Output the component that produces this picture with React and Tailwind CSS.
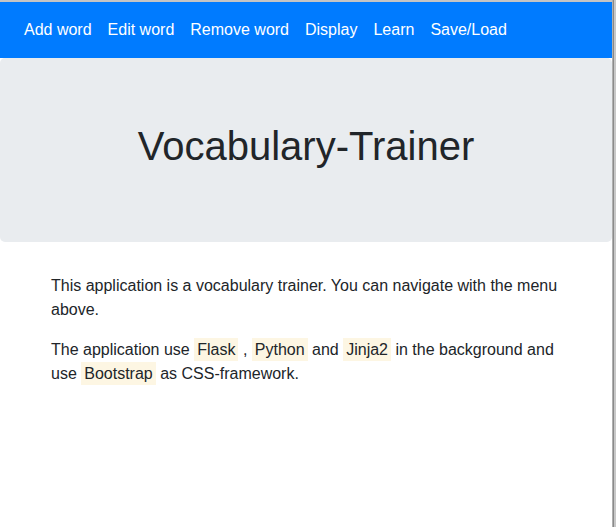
export default function App() {
  const links = ["Add word", "Edit word", "Remove word", "Display", "Learn", "Save/Load"];
  const Hl = ({ children }) => (
    <span className="inline-block bg-[#fdf6e3] px-[3px] leading-[23px]">{children}</span>
  );
  return (
    <div className="flex h-[527px] w-[616px] bg-white text-[#212529]" style={{ fontFamily: '"Liberation Sans", Arial, sans-serif' }}>
      <div className="flex w-[612px] flex-col">
        <div className="h-[2px] bg-[#c4c4c4]" />
        <nav className="flex h-[56px] items-center bg-[#007bff] px-4">
          {links.map((l) => (
            <a key={l} className="px-2 py-2 text-base leading-6 text-white">{l}</a>
          ))}
        </nav>
        <div className="mb-8 rounded-[5px] bg-[#e9ecef] px-8 pt-16 pb-[72px] text-center">
          <h1 className="text-[40px] font-normal leading-[48px]">Vocabulary-Trainer</h1>
        </div>
        <div className="mx-auto w-[540px] px-[15px] text-base leading-6">
          <p className="mb-4">
            This application is a vocabulary trainer. You can navigate with the menu above.
          </p>
          <p className="mb-4">
            The application use <Hl>Flask</Hl> , <Hl>Python</Hl> and <Hl>Jinja2</Hl> in the background and use <Hl>Bootstrap</Hl> as CSS-framework.
          </p>
        </div>
      </div>
      <div className="flex w-[4px] bg-[#d0d0d0]">
        <div className="w-[1px] bg-[#b0b0b0]" />
        <div className="w-[1px] bg-[#8a8a8a]" />
        <div className="w-[2px] bg-[#c8c8c8]" />
      </div>
    </div>
  );
}
